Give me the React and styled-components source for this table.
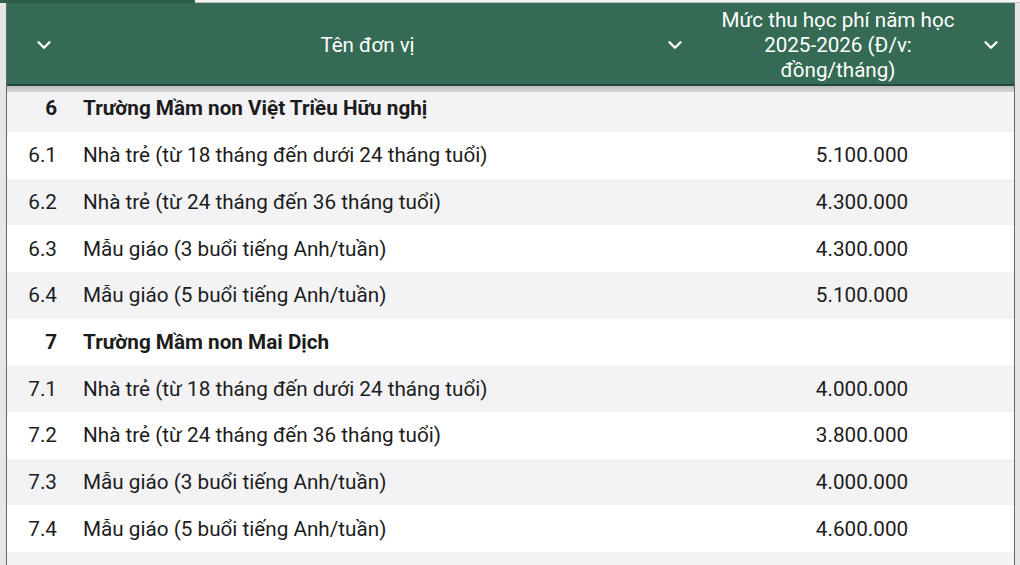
import React from 'react'
import styled, { createGlobalStyle } from 'styled-components'
import { ChevronDown } from 'lucide-react'

const GlobalStyle = createGlobalStyle`
  html, body {
    margin: 0;
    padding: 0;
    background: #ffffff;
    overflow: hidden;
  }
  body {
    font-family: Roboto, "Noto Sans", "Liberation Sans", sans-serif;
    color: #1c1c1c;
  }
`

const Screen = styled.div`
  width: 1020px;
  height: 565px;
  display: flex;
  flex-direction: column;
  overflow: hidden;
`

const TopStrip = styled.div`
  height: 3px;
  display: flex;
  flex-shrink: 0;
`

const TopTab = styled.div`
  width: 195px;
  background: #2f5f4a;
`

const TopRest = styled.div`
  flex: 1;
  background: #f4f4f4;
  border-bottom: 1px solid #b9c4bd;
`

const Body = styled.div`
  flex: 1;
  display: flex;
  min-height: 0;
`

const Gutter = styled.div`
  width: ${p => p.$w}px;
  flex-shrink: 0;
  background: #e6e6e6;
  border-${p => p.$side}: 1.5px solid #5d6b64;
`

const Sheet = styled.div`
  flex: 1;
  display: flex;
  flex-direction: column;
  min-width: 0;
`

const Grid = styled.div`
  display: grid;
  grid-template-columns: 64px 625px 1fr;
`

const HeaderRow = styled(Grid)`
  height: 81px;
  background: #356a54;
  color: #ffffff;
  border-bottom: 2px solid #23473a;
  flex-shrink: 0;
`

const HeadCell = styled.div`
  display: flex;
  align-items: center;
  justify-content: ${p => (p.$only ? 'center' : 'space-between')};
  padding: ${p => p.$pad || '0'};
  padding-top: 3px;
`

const HeadText = styled.div`
  flex: 1;
  text-align: center;
  font-size: 20.6px;
  line-height: 25px;
`

const Shadow = styled.div`
  height: 6px;
  flex-shrink: 0;
  background: linear-gradient(#bdbdbd, #d6d6d6);
`

const Row = styled(Grid)`
  height: ${p => p.$h || 46.67}px;
  background: ${p => (p.$alt ? '#f3f3f6' : '#ffffff')};
  font-size: 20.7px;
  font-weight: ${p => (p.$bold ? 700 : 400)};
  flex-shrink: 0;
`

const Cell = styled.div`
  display: flex;
  align-items: center;
  justify-content: ${p => p.$justify || 'flex-start'};
  padding: ${p => p.$pad || '0'};
  white-space: nowrap;
`

const rows = [
  { no: '6', name: 'Trường Mầm non Việt Triều Hữu nghị', bold: true },
  { no: '6.1', name: 'Nhà trẻ (từ 18 tháng đến dưới 24 tháng tuổi)', fee: '5.100.000' },
  { no: '6.2', name: 'Nhà trẻ (từ 24 tháng đến 36 tháng tuổi)', fee: '4.300.000' },
  { no: '6.3', name: 'Mẫu giáo (3 buổi tiếng Anh/tuần)', fee: '4.300.000' },
  { no: '6.4', name: 'Mẫu giáo (5 buổi tiếng Anh/tuần)', fee: '5.100.000' },
  { no: '7', name: 'Trường Mầm non Mai Dịch', bold: true },
  { no: '7.1', name: 'Nhà trẻ (từ 18 tháng đến dưới 24 tháng tuổi)', fee: '4.000.000' },
  { no: '7.2', name: 'Nhà trẻ (từ 24 tháng đến 36 tháng tuổi)', fee: '3.800.000' },
  { no: '7.3', name: 'Mẫu giáo (3 buổi tiếng Anh/tuần)', fee: '4.000.000' },
  { no: '7.4', name: 'Mẫu giáo (5 buổi tiếng Anh/tuần)', fee: '4.600.000' },
  { no: '', name: '', fee: '' },
]

function Chevron() {
  return <ChevronDown size={22} strokeWidth={2.6} color="#ffffff" />
}

export default function App() {
  return (
    <Screen>
      <GlobalStyle />
      <TopStrip>
        <TopTab />
        <TopRest />
      </TopStrip>
      <Body>
        <Gutter $w={6} $side="right" />
        <Sheet>
          <HeaderRow>
            <HeadCell $only $pad="0 0 0 10px">
              <Chevron />
            </HeadCell>
            <HeadCell $pad="0 10px 0 0">
              <HeadText>Tên đơn vị</HeadText>
              <Chevron />
            </HeadCell>
            <HeadCell $pad="0 12px 0 0">
              <HeadText>
                Mức thu học phí năm học<br />2025-2026 (Đ/v:<br />đồng/tháng)
              </HeadText>
              <Chevron />
            </HeadCell>
          </HeaderRow>
          <Shadow />
          {rows.map((r, i) => (
            <Row key={i} $alt={i % 2 === 0} $bold={r.bold} $h={i === 0 ? 40 : undefined}>
              <Cell $justify="flex-end" $pad={i === 0 ? '0 14px 8px 0' : '0 14px 0 0'}>{r.no}</Cell>
              <Cell $pad={i === 0 ? '0 0 8px 12px' : '0 0 0 12px'}>{r.name}</Cell>
              <Cell $justify="center" $pad="0 0 0 14px">{r.fee}</Cell>
            </Row>
          ))}
        </Sheet>
        <Gutter $w={5} $side="left" />
      </Body>
    </Screen>
  )
}
